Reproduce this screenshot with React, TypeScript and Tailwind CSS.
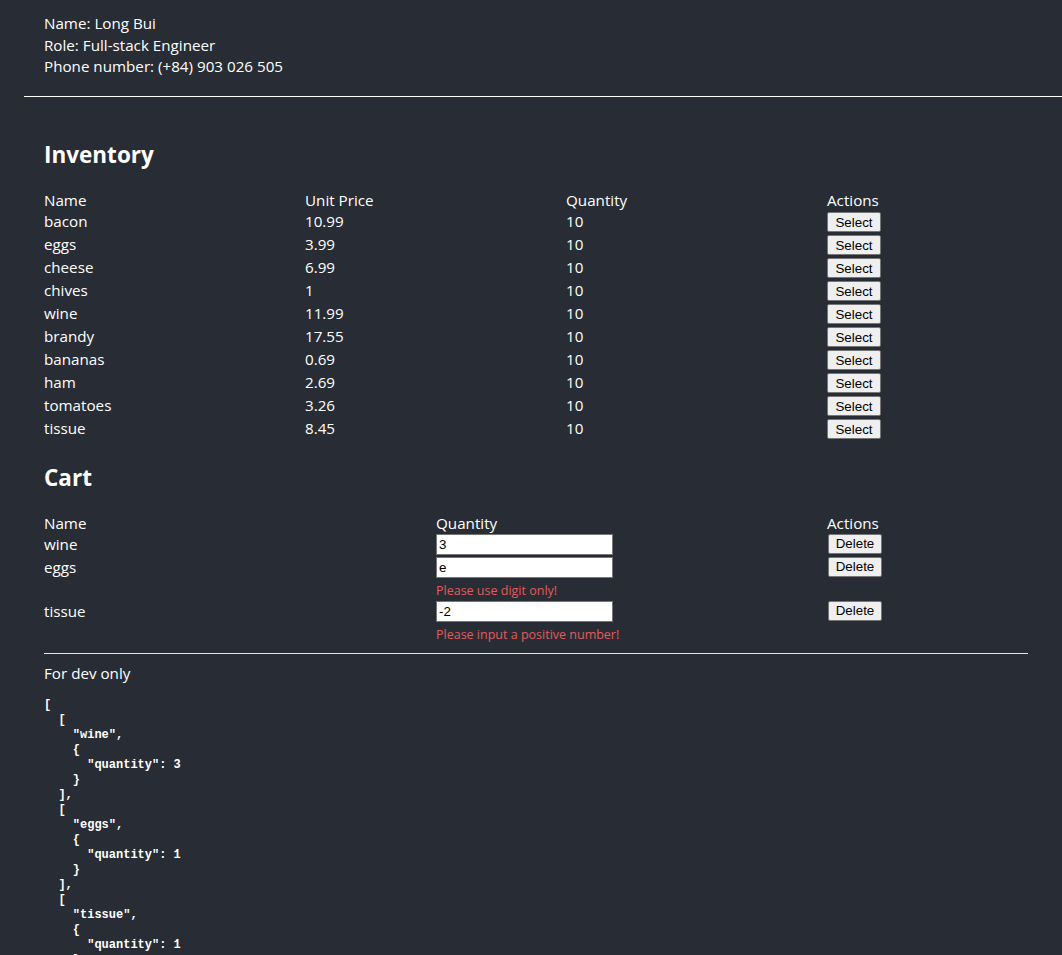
import React from "react";

const inventory = [
  { name: "bacon", price: "10.99", qty: 10 },
  { name: "eggs", price: "3.99", qty: 10 },
  { name: "cheese", price: "6.99", qty: 10 },
  { name: "chives", price: "1", qty: 10 },
  { name: "wine", price: "11.99", qty: 10 },
  { name: "brandy", price: "17.55", qty: 10 },
  { name: "bananas", price: "0.69", qty: 10 },
  { name: "ham", price: "2.69", qty: 10 },
  { name: "tomatoes", price: "3.26", qty: 10 },
  { name: "tissue", price: "8.45", qty: 10 },
];

const cart = [
  { name: "wine", value: "3", error: "" },
  { name: "eggs", value: "e", error: "Please use digit only!" },
  { name: "tissue", value: "-2", error: "Please input a positive number!" },
];

const devJson = JSON.stringify(
  [
    ["wine", { quantity: 3 }],
    ["eggs", { quantity: 1 }],
    ["tissue", { quantity: 1 }],
  ],
  null,
  2
);

function NativeButton({ children }: { children: React.ReactNode }) {
  return (
    <button className="w-[54px] h-[20px] bg-[#efefef] border border-[#767676] rounded-[2px] text-black text-[13.33px] leading-none font-['Liberation_Sans',Arial,sans-serif]">
      {children}
    </button>
  );
}

export default function App() {
  return (
    <div className="min-h-screen bg-[#282c34] text-white font-['Open_Sans',sans-serif] text-[15.2px] overflow-hidden">
      {/* Profile */}
      <div className="pl-[44px] pt-[13px] leading-[21.5px]">
        <div>Name: Long Bui</div>
        <div>Role: Full-stack Engineer</div>
        <div>Phone number: (+84) 903 026 505</div>
      </div>
      <hr className="ml-6 mt-[18px] border-t border-white" />

      <div className="pl-[44px] pr-[34px]">
        {/* Inventory */}
        <h2 className="mt-[42px] text-[22.5px] leading-8 font-bold">Inventory</h2>
        <div className="mt-[18px]">
          <div className="grid grid-cols-[261px_261px_261px_1fr] h-[21px] items-center">
            <div>Name</div>
            <div>Unit Price</div>
            <div>Quantity</div>
            <div>Actions</div>
          </div>
          {inventory.map((item) => (
            <div
              key={item.name}
              className="grid grid-cols-[261px_261px_261px_1fr] h-[23px] items-center"
            >
              <div>{item.name}</div>
              <div>{item.price}</div>
              <div>{item.qty}</div>
              <div>
                <NativeButton>Select</NativeButton>
              </div>
            </div>
          ))}
        </div>

        {/* Cart */}
        <h2 className="mt-[22px] text-[22.5px] leading-8 font-bold">Cart</h2>
        <div className="mt-[18px]">
          <div className="grid grid-cols-[392px_391px_1fr] h-[21px] items-center">
            <div>Name</div>
            <div>Quantity</div>
            <div>Actions</div>
          </div>
          {cart.map((item) => (
            <div key={item.name} className="grid grid-cols-[392px_391px_1fr] items-start">
              <div className="h-[23px] flex items-center">{item.name}</div>
              <div>
                <div className="h-[23px] flex items-center">
                  <input
                    readOnly
                    value={item.value}
                    className="w-[177px] h-[21px] px-[2px] bg-white text-black border border-[#767676] text-[13.33px] font-['Liberation_Sans',Arial,sans-serif] outline-none"
                  />
                </div>
                {item.error && (
                  <div className="mt-[3px] text-[12.5px] leading-[18px] text-[#e45b5b]">
                    {item.error}
                  </div>
                )}
              </div>
              <div className="h-[23px] flex items-center pl-[1px]">
                <NativeButton>Delete</NativeButton>
              </div>
            </div>
          ))}
        </div>

        <hr className="mt-[9px] border-t border-[#e5e5e5]" />

        {/* Dev */}
        <div className="mt-[9px] leading-[21px]">For dev only</div>
        <pre className="mt-[14px] text-[12px] leading-[15px] font-['Liberation_Mono',monospace] font-bold">
          {devJson}
        </pre>
      </div>
    </div>
  );
}
